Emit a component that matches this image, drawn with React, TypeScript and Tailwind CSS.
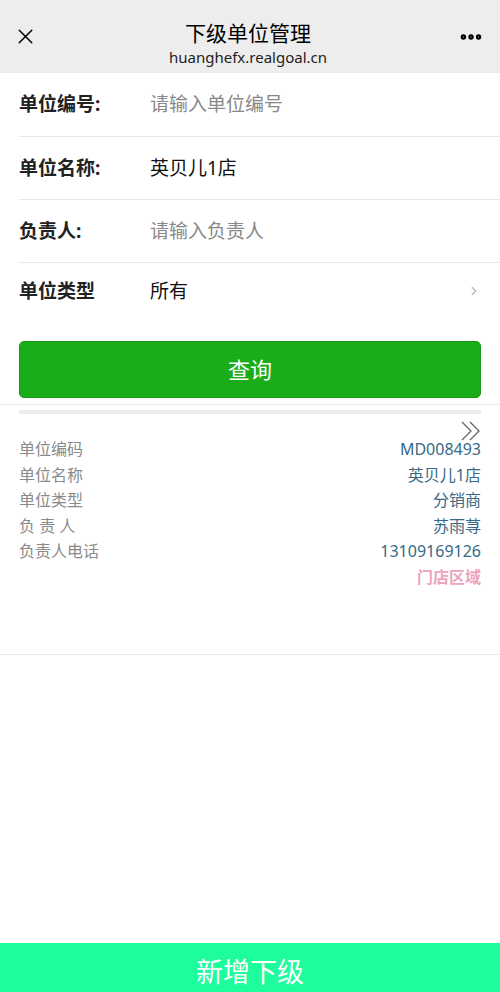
import { X, MoreHorizontal, ChevronRight } from "lucide-react";

const fields = [
	{ label: "单位编号:", value: "请输入单位编号", placeholder: true, h: "h-[64px]" },
	{ label: "单位名称:", value: "英贝儿1店", placeholder: false, h: "h-[63px]" },
	{ label: "负责人:", value: "请输入负责人", placeholder: true, h: "h-[63px]" },
];

const details = [
	{ label: "单位编码", value: "MD008493" },
	{ label: "单位名称", value: "英贝儿1店" },
	{ label: "单位类型", value: "分销商" },
	{ label: "负 责 人", value: "苏雨荨" },
	{ label: "负责人电话", value: "13109169126" },
];

const DoubleArrow = () => (
	<svg width="20" height="20" viewBox="0 0 20 20" fill="none" stroke="#666" strokeWidth="1.3">
		<polyline points="1,1 10,10 1,19" />
		<polyline points="9,1 18,10 9,19" />
	</svg>
);

const App: React.FC = () => {
	return (
		<div
			className="flex min-h-[992px] w-[500px] flex-col bg-white"
			style={{ fontFamily: '"Noto Sans", "Noto Sans CJK SC", sans-serif' }}
		>
			<header className="flex h-[73px] items-center bg-[#ededed] pl-[13px] pr-4">
				<X className="h-[25px] w-[25px] text-black" strokeWidth={1.4} />
				<div className="flex flex-1 flex-col items-center pt-[14px]">
					<div className="text-[21px] leading-[27px] text-black">下级单位管理</div>
					<div className="text-[15px] leading-[20px] text-[#222]">huanghefx.realgoal.cn</div>
				</div>
				<MoreHorizontal className="h-[26px] w-[26px] text-black" strokeWidth={3} />
			</header>

			<div className="pl-[19px]">
				{fields.map((f) => (
					<div
						key={f.label}
						className={`flex ${f.h} items-center border-b border-[#e6e6e6]`}
					>
						<div className="w-[131px] text-[19px] font-bold text-[#222]">{f.label}</div>
						<div
							className={
								f.placeholder
									? "text-[19px] text-[#888]"
									: "text-[19px] text-[#111]"
							}
						>
							{f.value}
						</div>
					</div>
				))}
				<div className="flex h-[56px] items-center pr-[19px]">
					<div className="w-[131px] text-[19px] font-bold text-[#222]">单位类型</div>
					<div className="flex-1 text-[19px] text-[#111]">所有</div>
					<ChevronRight className="h-[14px] w-[14px] text-[#bbb]" strokeWidth={2.5} />
				</div>
			</div>

			<div className="px-[19px] pt-[22px] pb-[6px]">
				<button className="flex h-[57px] w-full items-center justify-center rounded-[5px] border border-[#179b16] bg-[#1aad19] text-[22px] text-white">
					查询
				</button>
			</div>

			<div className="border-t border-[#ececec] px-[19px] pt-[5px]">
				<div className="h-[4px] bg-[#ededed]" />
				<div className="flex justify-end pt-[7px]">
					<DoubleArrow />
				</div>
				<div className="-mt-[4px] flex flex-col text-[16px] leading-[25.5px]">
					{details.map((d) => (
						<div key={d.label} className="flex justify-between">
							<span className="text-[#8a8a8a]">{d.label}</span>
							<span className="text-[#366a87]">{d.value}</span>
						</div>
					))}
					<div className="flex justify-end">
						<span className="font-semibold text-[#eca4ba]">门店区域</span>
					</div>
				</div>
			</div>

			<div className="mt-[64px] border-t border-[#e9e9e9]" />

			<div className="flex-1" />

			<button className="flex h-[49px] w-full items-start justify-center bg-[#1efd9b] pt-[11px] text-[27px] leading-[36px] text-white">
				新增下级
			</button>
		</div>
	);
};

export default App;
